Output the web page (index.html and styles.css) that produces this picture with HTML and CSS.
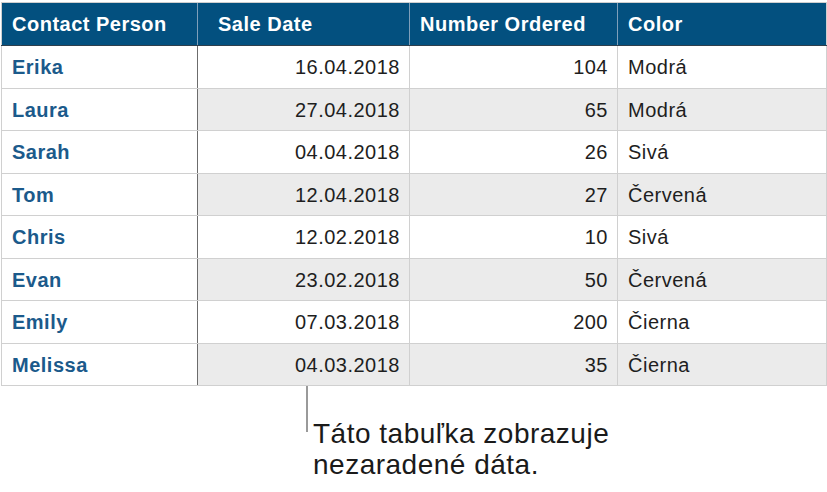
FILE: index.html
```html
<!DOCTYPE html>
<html lang="sk">
<head>
<meta charset="utf-8">
<link rel="stylesheet" href="styles.css">
</head>
<body>
<div class="page">
  <table class="grid">
    <thead>
      <tr>
        <th class="c1">Contact Person</th>
        <th class="c2">Sale Date</th>
        <th class="c3">Number Ordered</th>
        <th class="c4">Color</th>
      </tr>
    </thead>
    <tbody>
      <tr><td class="name">Erika</td><td class="num">16.04.2018</td><td class="num">104</td><td class="txt">Modrá</td></tr>
      <tr class="alt"><td class="name">Laura</td><td class="num">27.04.2018</td><td class="num">65</td><td class="txt">Modrá</td></tr>
      <tr><td class="name">Sarah</td><td class="num">04.04.2018</td><td class="num">26</td><td class="txt">Sivá</td></tr>
      <tr class="alt"><td class="name">Tom</td><td class="num">12.04.2018</td><td class="num">27</td><td class="txt">Červená</td></tr>
      <tr><td class="name">Chris</td><td class="num">12.02.2018</td><td class="num">10</td><td class="txt">Sivá</td></tr>
      <tr class="alt"><td class="name">Evan</td><td class="num">23.02.2018</td><td class="num">50</td><td class="txt">Červená</td></tr>
      <tr><td class="name">Emily</td><td class="num">07.03.2018</td><td class="num">200</td><td class="txt">Čierna</td></tr>
      <tr class="alt"><td class="name">Melissa</td><td class="num">04.03.2018</td><td class="num">35</td><td class="txt">Čierna</td></tr>
    </tbody>
  </table>
  <div class="callout">
    <div class="leader"></div>
    <p class="note">Táto tabuľka zobrazuje<br>nezaradené dáta.</p>
  </div>
</div>
</body>
</html>
```
FILE: styles.css
```css
html, body {
  margin: 0;
  padding: 0;
  background: #ffffff;
}
body {
  font-family: "Liberation Sans", Arial, sans-serif;
  color: #1e1e1e;
}
.page {
  width: 827px;
  height: 492px;
  padding: 2px 0 0 1px;
  box-sizing: border-box;
}
.grid {
  border-collapse: collapse;
  width: 826px;
  table-layout: fixed;
  font-size: 20px;
  letter-spacing: 0.5px;
  border: 1px solid #cfcfcf;
}
.grid th {
  background: #03507f;
  color: #ffffff;
  font-weight: bold;
  text-align: left;
  height: 43px;
  padding: 0 10px;
  box-sizing: border-box;
  border-left: 1px solid #7f9fba;
  border-bottom: 1px solid #2f3f4c;
  border-top: 1px solid #cfcfcf;
}
.grid th.c1 { width: 196px; border-left: 1px solid #cfcfcf; }
.grid th.c2 { width: 212px; padding-left: 20px; }
.grid th.c3 { width: 208px; }
.grid th.c4 { width: 209px; }
.grid td {
  height: 42.5px;
  box-sizing: border-box;
  padding: 2px 9px 0 10px;
  border: 1px solid #d0d0d0;
  background: #ffffff;
}
.grid tr.alt td { background: #ebebeb; }
.grid tr.alt td.name { background: #ffffff; }
.grid td.name {
  color: #1b5a8b;
  font-weight: bold;
  border-right: 1px solid #6c6c6c;
}
.grid td.num { text-align: right; }
.grid td.txt { text-align: left; }
.callout {
  display: flex;
  align-items: flex-start;
  margin-left: 305px;
}
.leader {
  width: 2px;
  height: 46px;
  background: #9a9a9a;
  flex: none;
}
.note {
  margin: 0 0 0 5px;
  padding-top: 32px;
  font-size: 28px;
  line-height: 31px;
  letter-spacing: 0.5px;
  color: #1a1a1a;
}
```
